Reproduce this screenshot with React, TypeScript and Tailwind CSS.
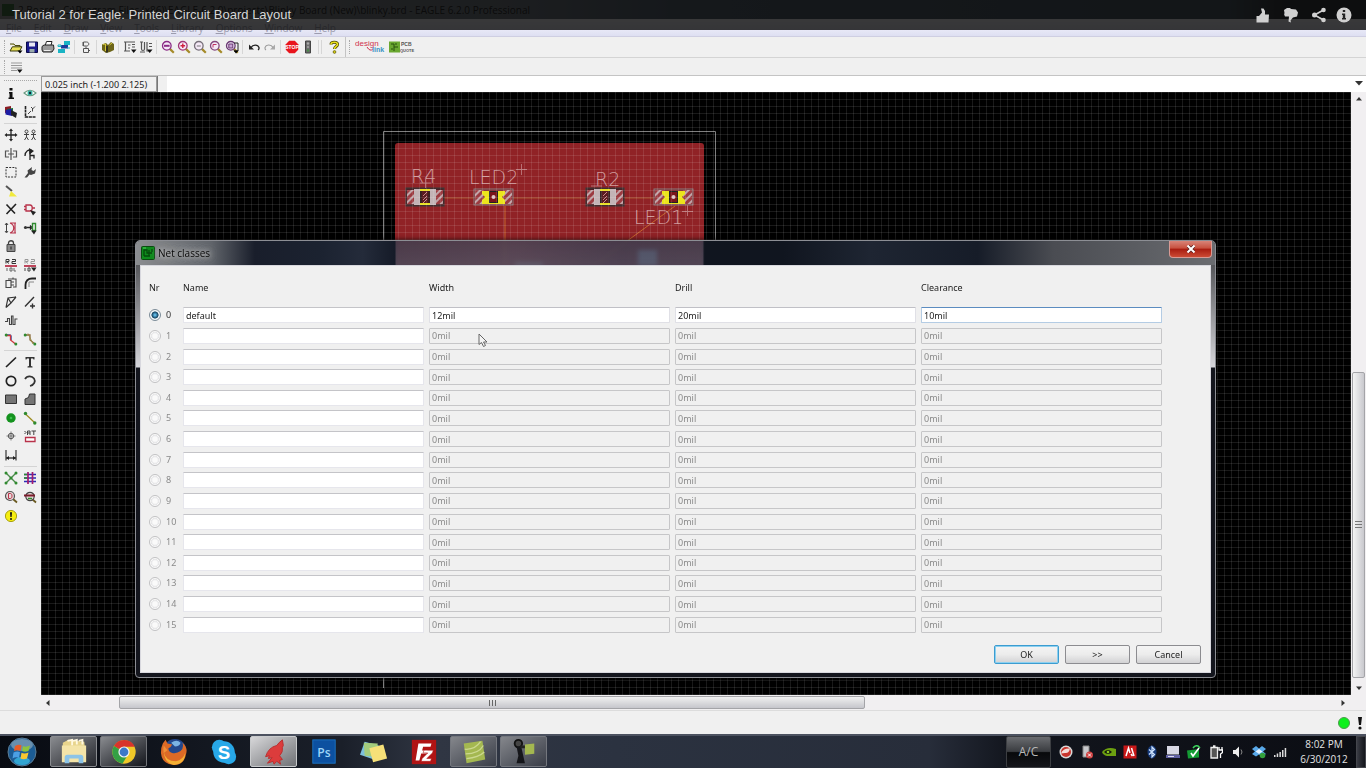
import React from "react";

type Art = Record<string, React.ReactNode>;

const K = "#222";
const G = "#2f8a2f";
const R = "#b8324a";

const lens = (glass: React.ReactNode, ring = "#8a2a86") => (
  <>
    <path d="M8.6 8.6 12.8 12.8" stroke="#a58a28" strokeWidth="2.2" />
    <circle cx="5.8" cy="5.8" r="4.3" fill="#f4e8f6" stroke={ring} strokeWidth="1.3" />
    {glass}
  </>
);

const toolArt: Art = {
  Open: (
    <>
      <path d="M1 4h4l1 1.5h5V7" fill="#f3ee8a" stroke="#4a4a10" />
      <path d="M1 11 3.4 6.8H13L10.5 11Z" fill="#e9e25a" stroke="#3a3a08" />
      <path d="M8.5 10.5h5L11 13.5Z" fill="#000" />
    </>
  ),
  Save: (
    <>
      <path d="M1.5 2h11v10.500h-11Z" fill="#1c1c8c" stroke="#0b0b46" />
      <path d="M4 2.500h6v4H4Z" fill="#e8e8f4" />
      <path d="M4.500 9h5v3.500h-5Z" fill="#9aa" />
    </>
  ),
  Print: (
    <>
      <path d="M4 6 5.500 1.500H11L9.800 6" fill="#fff" stroke={K} />
      <path d="M1 6.500 3 5h9.500l.5 4-2 3H2L1 10Z" fill="#9a9a9a" stroke={K} />
      <path d="M3 10.500h6.500" stroke="#eee" />
    </>
  ),
  "CAM processor": (
    <>
      <path d="M7 1h6v4H7ZM1 9h7v4H1Z" fill="#19b4c4" />
      <path d="M4 5h7v3.500H4Z" fill="#1c3c9c" />
      <path d="M1 5h3v1.500H1ZM10 8h3" stroke="#19b4c4" fill="none" />
    </>
  ),
  Schematic: (
    <>
      <path d="M4.500 2h3c3 0 3 4 0 4h-3ZM3 3h1.500M3 5h1.500" fill="none" stroke="#555" />
      <path d="M4.500 8.500h5v4h-5ZM7 6.500v2M9.500 10.500h1.500" fill="none" stroke="#555" />
    </>
  ),
  Use: (
    <>
      <path d="M1 4.500 5 3l2 2 3-3 3 2v6L9 12 5 13 1 10Z" fill="#6c6418" />
      <path d="M2 4.500 4.500 4v7M8.500 5 11 3" stroke="#d6c838" fill="none" />
      <path d="M6 6v6.500" stroke="#222" strokeWidth="1.500" />
    </>
  ),
  Script: (
    <>
      <path d="M1 2h11M2.500 2v9M1 11h6M5 5h2.500M5 8h2M9 4.500h3M9 7h3" stroke="#555" fill="none" strokeWidth="1.200" />
      <path d="M8 9.500h5.500L10.700 13Z" fill="#111" />
    </>
  ),
  "Run ULP": (
    <>
      <path d="M1 2h3M2.500 2v7c0 2 3 2 3 0V2M8 2v9h2M10 3.500h3M10 6.500h3M1 12h5" stroke="#555" fill="none" strokeWidth="1.200" />
      <path d="M8 9.500h5.500L10.700 13Z" fill="#111" />
    </>
  ),
  "Zoom fit": lens(<path d="M3 5.800h5.600" stroke="#8a2a86" strokeWidth="2" />),
  "Zoom in": lens(<path d="M3.500 5.800h4.600M5.800 3.500v4.600" stroke="#d02040" strokeWidth="1.400" />, "#a03878"),
  "Zoom out": lens(<path d="M3.800 6h4" stroke="#777" />, "#77707a"),
  "Zoom redraw": lens(<path d="M4 7.500V4.500h3.500" stroke="#c03060" fill="none" />, "#84487e"),
  "Zoom select": (
    <>
      {lens(<path d="M3.800 4h4v4h-4Z" fill="#c9a3d4" stroke="#6a3a74" />, "#6a3a74")}
      <path d="M9 3h4v8H9" fill="none" stroke={K} />
      <path d="M8.500 10.500h5L11 13.500Z" fill="#000" />
    </>
  ),
  Undo: (
    <>
      <path d="M2 4.500v5h5Z" fill={K} />
      <path d="M4 7.500C6 4 11 4.500 12 7.500c.2 1-.2 2-1 2.500" fill="none" stroke={K} strokeWidth="1.300" />
    </>
  ),
  Redo: (
    <>
      <path d="M12 4.500v5H7Z" fill="#aaa" />
      <path d="M10 7.500C8 4 3 4.500 2 7.500c-.2 1 .2 2 1 2.500" fill="none" stroke="#999" strokeWidth="1.100" />
    </>
  ),
  Stop: (
    <>
      <path d="M4.200.8h5.600l3.400 3.400v5.600l-3.400 3.400H4.200L.8 9.800V4.200Z" fill="#e8141c" />
      <text x="7" y="9" textAnchor="middle" className="fill-white font-['Liberation_Sans'] text-[5px] font-bold">
        STOP
      </text>
    </>
  ),
  Go: (
    <>
      <path d="M4.500 1h5v12h-5Z" fill="#6a6a6a" stroke="#444" />
      <circle cx="7" cy="3.500" r="1.200" fill="#aaa" />
      <circle cx="7" cy="7" r="1.200" fill="#999" />
      <circle cx="7" cy="10.500" r="1.200" fill="#4a8a4a" />
    </>
  ),
  Help: (
    <>
      <path d="M4 4.500C4 1.500 10.500 1.500 10.500 4.500 10.500 6.500 7.500 6.500 7.500 9" fill="none" stroke="#4a4400" strokeWidth="3" />
      <path d="M4 4.500C4 1.500 10.500 1.500 10.500 4.500 10.500 6.500 7.500 6.500 7.500 9" fill="none" stroke="#ece31c" strokeWidth="1.600" />
      <circle cx="7.500" cy="12" r="1.400" fill="#d8cf10" stroke="#4a4400" strokeWidth=".6" />
    </>
  ),
};

const paletteArt: Art = {
  Info: <path d="M5.500 2h3v2.500h-3ZM5 6h3.500v5.500H10v1.500H4.500v-1.500h1V7.500H5Z" fill="#111" />,
  Show: (
    <>
      <path d="M1 7Q7 1.500 13 7 7 12.500 1 7Z" fill="#fff" stroke="#6a9a80" strokeWidth="1.100" />
      <circle cx="7" cy="7" r="2.500" fill="#38b8a8" />
      <circle cx="7" cy="7" r="1.200" fill="#123" />
    </>
  ),
  Display: (
    <>
      <path d="M1 2l6-1v6L1 8Z" fill="#8c1c24" />
      <path d="M3 4l6-1v6l-6 1Z" fill="#187030" />
      <path d="M1.500 5 8 4v7l-6.500-1.500Z" fill="#1c1ca4" />
      <path d="M7 5l6 3-1 5-5-3Z" fill="#222" />
    </>
  ),
  Mark: (
    <>
      <path d="M2.500 1v11H13" fill="none" stroke={K} strokeWidth="1.600" strokeDasharray="3 .6" />
      <path d="M5 9l3-3M8 2l2 2M12 1.500 9.500 4v2.500" stroke="#444" fill="none" />
    </>
  ),
  Move: (
    <>
      <path d="M7 2v10M2 7h10" stroke={K} strokeWidth="1.300" />
      <path d="M7 .5 9 3H5ZM7 13.500 9 11H5ZM.5 7 3 5v4ZM13.500 7 11 5v4Z" fill={K} />
    </>
  ),
  Copy: <path d="M2 3.500a1.500 1.500 0 1 0 3 0 1.500 1.500 0 1 0-3 0M3.500 5v4L1.500 12M3.500 9l2 3M1 6.500h5M9 3.500a1.500 1.500 0 1 0 3 0 1.500 1.500 0 1 0-3 0M10.500 5v4l-2 3M10.500 9l2 3M8 6.500h5" fill="none" stroke="#444" />,
  Mirror: <path d="M7 1v12M5 4H1.500v6H5M9 4h3.500v6H9M4 7h6" fill="none" stroke="#555" strokeWidth="1.200" />,
  Rotate: (
    <>
      <path d="M2 9C2 4 6 2 9 3.500M7 4v9M7 8.500h4v3" fill="none" stroke={K} strokeWidth="1.300" />
      <path d="M6 1l5 3-4.500 3.500Z" fill={K} />
    </>
  ),
  Group: <path d="M2 2.500h10v9.500H2Z" fill="none" stroke="#333" strokeDasharray="2 1.200" />,
  Change: <path d="M1.500 12.500 5 8 4.500 5.500 9 2l-.5 3 2 1 2.500-2-1 4.500-4 1.500-1.500-.5L4 12.500Z" fill="#444" />,
  Paste: (
    <>
      <path d="M2 2l6 5" stroke="#555" strokeWidth="2" />
      <path d="M7 7l6 5.500H5Z" fill="#f1ea3c" />
    </>
  ),
  Delete: <path d="M2.500 2.500 11 11.500M12 2 2.500 12" stroke={K} strokeWidth="1.600" />,
  Add: (
    <>
      <path d="M3 3h4c3 0 3 6 0 6H3ZM1 4.500h2M1 7.500h2M9.500 6H12" fill="none" stroke={R} strokeWidth="1.300" />
      <path d="M7 8l6 2-3 3.500Z" fill={K} />
    </>
  ),
  Pinswap: (
    <>
      <path d="M2.500 2v9M1 4l1.500-2L4 4M1 10l1.500 2L4 10" fill="none" stroke="#444" />
      <path d="M6 2h6M6 12h6M6 12c5-2 5-8 0-10M11 2v10" fill="none" stroke={R} strokeWidth="1.200" />
    </>
  ),
  Replace: (
    <>
      <circle cx="2.500" cy="6.500" r="1.600" fill="#333" />
      <path d="M4 6.500h4M7 4.500l2 2-2 2" fill="none" stroke="#222" strokeWidth="1.300" />
      <path d="M9.500 2.500h3v7h-3Z" fill="none" stroke={G} strokeWidth="1.400" />
      <path d="M8 9.500h5.500L11 13.500Z" fill={K} />
    </>
  ),
  Lock: (
    <>
      <path d="M4.500 6V4c0-3 5-3 5 0v2" fill="none" stroke="#444" strokeWidth="1.300" />
      <path d="M3 5.500h8v7H3Z" fill="#8a8a8a" stroke="#444" />
      <path d="M7 7.500v3" stroke="#222" />
    </>
  ),
  Name: (
    <>
      <path d="M2 5.500V1.500h3v2H2.500L5 5.500M8 1.500h3.500v2H8v2h4" fill="none" stroke="#333" />
      <path d="M1 8h12" stroke={R} strokeWidth="1.800" />
      <path d="M3 10v3M6 10h2v3H6ZM10 10v3h2" fill="none" stroke="#666" />
    </>
  ),
  Value: (
    <>
      <path d="M2 5.500V1.500h3v2H2.500L5 5.500M8 1.500h3.500v2H8v2h4" fill="none" stroke="#999" />
      <path d="M1 8h12" stroke={R} strokeWidth="1.800" />
      <path d="M2 10v3M5 10h2v3H5Z" fill="none" stroke="#444" />
      <path d="M8 9.500h5.500L11 13.500Z" fill={K} />
    </>
  ),
  Smash: <path d="M2 4.500h5v7H2ZM4 3h8v8H9M9 3V1.500M7 6h3M7 9h3" fill="none" stroke="#444" strokeWidth="1.100" />,
  Miter: (
    <>
      <path d="M2.500 13V9C2.500 5 5 2.500 9 2.500h4" fill="none" stroke={K} strokeWidth="1.800" />
      <path d="M6 6h5M6 6v5" stroke="#888" fill="none" />
    </>
  ),
  Split: <path d="M2 12.500 4 3l8-1M4 3l3 5 5-6M2 12.500 7 8" fill="none" stroke="#333" strokeWidth="1.200" />,
  Optimize: <path d="M2 11.500 11 2M9.500 8.500v5M7 11h5" stroke="#333" strokeWidth="1.400" />,
  Meander: <path d="M1 8.500h2.500V5.500h2v6h2V3h1.500v8.500h2V6h2.500" fill="none" stroke="#444" strokeWidth="1.100" />,
  Route: (
    <>
      <path d="M2 3h4l1 1v4" fill="none" stroke="#2a5ab0" strokeWidth="1.500" />
      <path d="M2 3.500h4.500V8l5 4" fill="none" stroke="#d0343c" strokeWidth="1.300" />
      <circle cx="2.200" cy="3" r="1.500" fill={G} />
      <circle cx="11.800" cy="12" r="1.500" fill={G} />
    </>
  ),
  Ripup: (
    <>
      <path d="M2 3h5v5l5 4" fill="none" stroke="#8a6a3a" strokeWidth="1.300" />
      <path d="M5 1.500 10 12" stroke="#9a8a4a" />
      <circle cx="2.200" cy="3" r="1.500" fill={G} />
      <circle cx="11.800" cy="12" r="1.500" fill={G} />
    </>
  ),
  Wire: <path d="M2 12 12 2.500" stroke={K} strokeWidth="1.700" />,
  Text: <path d="M2.500 2h9v2.500h-1L10 3.500H8V11l1.500.5v1h-5v-1L6 11V3.500H4l-.5 1h-1Z" fill="#333" />,
  Circle: <circle cx="7" cy="7" r="4.700" fill="none" stroke="#222" strokeWidth="1.700" />,
  Arc: <path d="M2 5C4 1.500 9 1.500 11 4.500s0 6.500-4 7.500" fill="none" stroke="#333" strokeWidth="1.700" />,
  Rectangle: <path d="M1.500 3h11v8.500h-11Z" fill="#757575" stroke="#333" />,
  Polygon: <path d="M2 12.500V7l3.500-1.500L6.500 2H12v10.500Z" fill="#757575" stroke="#333" />,
  Via: (
    <>
      <circle cx="7" cy="7" r="4.700" fill="#14921e" />
      <circle cx="7" cy="7" r="1.300" fill="#3cc04c" />
    </>
  ),
  Signal: (
    <>
      <path d="M2 2.500 12 12" stroke="#9a8a1c" strokeWidth="1.200" />
      <circle cx="2.500" cy="2.500" r="1.700" fill={G} />
      <circle cx="11.800" cy="12" r="1.700" fill={G} />
    </>
  ),
  Hole: (
    <>
      <circle cx="7" cy="7" r="2.700" fill="#ddd" stroke="#555" />
      <path d="M7 2.500v9M2.500 7h9" stroke="#666" strokeWidth=".8" />
    </>
  ),
  Attribute: (
    <>
      <path d="M1.500 2l1.500 1.500L1.500 5M4.500 6V2h2.500v4M4.500 4H7M8.500 2H13M10.800 2v4" fill="none" stroke="#444" />
      <path d="M2.500 8.500h9.500v4H2.500Z" fill="#fff" stroke={R} strokeWidth="1.300" />
    </>
  ),
  Dimension: (
    <>
      <path d="M2 2v10.500M12 2v10.500M2 10h10" stroke="#444" strokeWidth="1.300" />
      <path d="M2 10l3-2v4ZM12 10 9 8v4Z" fill="#222" />
    </>
  ),
  Ratsnest: (
    <>
      <path d="M2 2l10 10M12 2 2 12" stroke="#4c8a4c" strokeWidth="1.400" />
      {[[2, 2], [12, 2], [2, 12], [12, 12], [7, 7]].map(([x, y]) => (
        <circle key={`${x}-${y}`} cx={x} cy={y} r="1.500" fill={G} />
      ))}
    </>
  ),
  Auto: (
    <>
      <path d="M1 3.500h12M1 7h12M1 10.500h12" stroke="#2c2cb8" strokeWidth="1.500" />
      <path d="M5 1v12M9.500 1v12" stroke="#a01c6c" strokeWidth="1.700" />
      <path d="M1 3.500h3M1 7h3" stroke={G} strokeWidth="1.700" />
    </>
  ),
  "Electrical rule check": (
    <>
      <path d="M9 9l4 3.500" stroke="#6a5a20" strokeWidth="1.800" />
      <circle cx="6" cy="6" r="4.500" fill="#e6d8d8" stroke="#555" strokeWidth="1.200" />
      <path d="M4.500 3.500v5h2c2 0 2-5 0-5Z" fill="none" stroke={R} />
    </>
  ),
  "Design rule check": (
    <>
      <path d="M9 9l4 3.500" stroke="#6a5a20" strokeWidth="1.800" />
      <circle cx="7" cy="6.500" r="4.200" fill="#e6d8d8" stroke="#444" strokeWidth="1.200" />
      <path d="M1 5.500h11" stroke="#7c1c2c" strokeWidth="2" />
      <path d="M5 8.500h4" stroke={G} strokeWidth="1.500" />
    </>
  ),
  Errors: (
    <>
      <circle cx="7" cy="7" r="5.600" fill="#f6ee10" stroke="#a9a210" />
      <path d="M6 3.200h2L7.600 8H6.400Z" fill="#111" />
      <circle cx="7" cy="10" r="1" fill="#111" />
    </>
  ),
};

function ToolButton({ name, art }: { name: string; art: Art }) {
  return (
    <button type="button" aria-label={name} title={name} className="block size-3.5 shrink-0">
      <svg viewBox="0 0 14 14" className="size-3.5">
        {art[name]}
      </svg>
    </button>
  );
}

const toolGroups = [
  ["Open", "Save", "Print", "CAM processor"],
  ["Schematic"],
  ["Use"],
  ["Script", "Run ULP"],
  ["Zoom fit", "Zoom in", "Zoom out", "Zoom redraw", "Zoom select"],
  ["Undo", "Redo"],
  ["Stop", "Go"],
];

const menus = ["File", "Edit", "Draw", "View", "Tools", "Library", "Options", "Window", "Help"];

function Grip() {
  return <span className="h-3.5 w-0 border-l border-dotted border-[#a8a8a8]" />;
}

function Toolbar() {
  return (
    <div className="flex h-[21px] items-center border-b border-[#d4d4d4] bg-[#f0f0f0] pl-1">
      <Grip />
      <div className="flex items-center pl-1">
        {toolGroups.map((group, i) => (
          <React.Fragment key={group[0]}>
            {i > 0 && <span className="mx-[3px] h-3.5 w-[2px] border-l border-[#d6d6d6]" />}
            <div className="flex gap-[2px]">
              {group.map((name) => (
                <ToolButton key={name} name={name} art={toolArt} />
              ))}
            </div>
          </React.Fragment>
        ))}
        <span className="ml-[3px] mr-[5px] h-3.5 w-[4px] border-x border-[#d6d6d6]" />
        <ToolButton name="Help" art={toolArt} />
      </div>
      <span className="ml-1 mr-[3px] h-full border-l border-[#c4c4c4]" />
      <Grip />
      <button type="button" aria-label="design link" className="ml-[5px]">
        <svg viewBox="0 0 30 16" className="h-4 w-[30px]">
          <text x="0" y="7" className="fill-[#d0304c] font-['Liberation_Sans'] text-[8px]">design</text>
          <path d="M12 8q3 5 6 2" fill="none" stroke="#d0304c" />
          <text x="17" y="13" className="fill-[#3a94c4] font-['Liberation_Sans'] text-[7px] font-bold">link</text>
        </svg>
      </button>
      <button type="button" aria-label="PCB quote" className="ml-1">
        <svg viewBox="0 0 28 14" className="h-3.5 w-7">
          <rect x="0" y="1.500" width="11" height="11" fill="#6aa830" />
          <path d="M2 4h3v3h4M5 7v4M2 9h2M7 3v2" fill="none" stroke="#28500c" />
          <text x="12" y="6" className="fill-[#555] font-['Liberation_Sans'] text-[5px] font-bold">PCB</text>
          <text x="11" y="12" className="fill-[#555] font-['Liberation_Sans'] text-[4px] font-bold">QUOTE</text>
        </svg>
      </button>
    </div>
  );
}

const paletteGroups = [
  { box: "h-[37px]", items: ["Info", "Show", "Display", "Mark"] },
  {
    box: "h-[222px]",
    items: [
      "Move", "Copy", "Mirror", "Rotate", "Group", "Change", "Paste", "", "Delete", "Add", "Pinswap", "Replace",
      "Lock", "", "Name", "Value", "Smash", "Miter", "Split", "Optimize", "Meander", "", "Route", "Ripup",
    ],
  },
  {
    box: "h-[111px]",
    items: ["Wire", "Text", "Circle", "Arc", "Rectangle", "Polygon", "Via", "Signal", "Hole", "Attribute", "Dimension", ""],
  },
  {
    box: "h-[56px]",
    items: ["Ratsnest", "Auto", "Electrical rule check", "Design rule check", "Errors", ""],
  },
];

function Palette() {
  return (
    <aside className="flex w-[41px] shrink-0 flex-col bg-[#f0f0f0] px-1 pt-1">
      <span className="mb-[3px] border-t border-dotted border-[#a8a8a8]" />
      {paletteGroups.map((g, i) => (
        <React.Fragment key={g.box}>
          {i > 0 && <hr className="my-[2px] border-[#d4d4d4]" />}
          <div className={`grid grid-cols-[14px_14px] gap-x-[5px] items-center ${g.box}`}>
            {g.items.map((name, j) =>
              name ? <ToolButton key={name} name={name} art={paletteArt} /> : <span key={j} />
            )}
          </div>
        </React.Fragment>
      ))}
    </aside>
  );
}

function Resistor({ x, y }: { x: number; y: number }) {
  return (
    <g transform={`translate(${x} ${y})`}>
      <rect x="0" y="0" width="38" height="18" fill="#4a2024" stroke="#3a3a3a" />
      <rect x="1" y="2" width="13" height="14" fill="url(#hatch)" />
      <rect x="24" y="2" width="13" height="14" fill="url(#hatch)" />
      <rect x="8" y="1" width="6" height="16" fill="#c3b3b6" />
      <rect x="24" y="1" width="6" height="16" fill="#c3b3b6" />
      <rect x="15" y="1.500" width="8" height="15" fill="#5a1c20" stroke="#222" />
      <path d="M14 2h10M14 16h10" stroke="#e8e020" strokeWidth="2" />
      <path d="M17 8l4-4M17 12l4-4M17 15l4-4" stroke="#c9888c" />
    </g>
  );
}

function Led({ x, y }: { x: number; y: number }) {
  return (
    <g transform={`translate(${x} ${y})`}>
      <rect x="0" y="1" width="39" height="16" fill="#7a2428" stroke="#8a7a7c" />
      <rect x="1" y="2" width="9" height="14" fill="url(#hatch)" />
      <rect x="29" y="2" width="9" height="14" fill="url(#hatch)" />
      <path d="M8 3h23v3l-3 3 3 3v4H8v-4l3-3-3-3Z" fill="#ece41c" />
      <rect x="15.500" y="3.500" width="8" height="11" fill="#7a1418" stroke="#222" />
      <circle cx="19.500" cy="9" r="2" fill="#e0c4c4" />
    </g>
  );
}

function Board() {
  const label = "fill-[#cf9a9c] font-['DejaVu_Sans_Light','DejaVu_Sans',sans-serif] text-[19px] font-extralight";
  return (
    <svg viewBox="380 125 345 563" className="absolute left-[339px] top-[33px] h-[563px] w-[345px]">
      <defs>
        <pattern id="hatch" width="5" height="5" patternUnits="userSpaceOnUse" patternTransform="rotate(45)">
          <rect width="5" height="5" fill="#9c3a40" />
          <rect width="2" height="5" fill="#c0a4a8" />
        </pattern>
      </defs>
      <path d="M383.500 688V131.500h332V640" fill="none" stroke="#7e7e7e" />
      <rect x="395" y="143" width="309" height="480" rx="3" fill="#902226" />
      <path d="M443 198h31M513 198h73M624 198h30" fill="none" stroke="#a8542c" />
      <path d="M505 206v120M675 206 560 290" fill="none" stroke="#c4642c" />
      <Resistor x={406} y={188} />
      <Led x={474} y={188} />
      <Resistor x={586} y={188} />
      <Led x={654} y={188} />
      <text x="411" y="183" className={label}>R4</text>
      <text x="469" y="184" className={label}>LED2</text>
      <text x="595" y="186" className={label}>R2</text>
      <text x="634" y="224" className={label}>LED1</text>
      <path d="M516 169.500h11M521.500 164v11M682 211.500h11M687.500 205v11M420 183h11M425.500 178v10M591 186h11" stroke="#b87074" fill="none" />
      <rect x="638" y="250" width="19" height="16" fill="#c8dcff" />
      <rect x="515" y="262" width="28" height="8" fill="#c09a9e" />
    </svg>
  );
}

function Canvas() {
  return (
    <div className="relative flex-1 overflow-hidden bg-black">
      <Board />
      <div className="absolute inset-0 bg-[linear-gradient(to_right,rgba(255,255,255,0.1)_1px,transparent_1px),linear-gradient(to_bottom,rgba(255,255,255,0.1)_1px,transparent_1px)] bg-[length:7px_7px]" />
    </div>
  );
}

function Arrow({ d, label }: { d: string; label: string }) {
  return (
    <button type="button" aria-label={label} className="flex size-3.5 shrink-0 items-center justify-center">
      <svg viewBox="0 0 8 8" className="size-2">
        <path d={d} fill="#333" />
      </svg>
    </button>
  );
}

function Workspace() {
  return (
    <section className="flex min-w-0 flex-1 flex-col">
      <div className="flex h-4 items-stretch bg-white">
        <div className="flex w-[116px] items-center border border-[#9a9a9a] bg-[#f0f0f0] pl-[3px] font-['Noto_Sans',sans-serif] text-[9px] leading-none text-[#222] whitespace-nowrap">
          0.025 inch (-1.200 2.125)
        </div>
        <span className="w-2.5 border-l border-[#777] bg-[#f0f0f0]" />
        <input aria-label="Command line" className="min-w-0 flex-1 bg-white px-1 text-[9px] outline-none" />
        <Arrow d="M0 2h8L4 6.500Z" label="Command history" />
      </div>
      <div className="flex min-h-0 flex-1">
        <Canvas />
        <div className="flex w-[15px] flex-col items-center bg-[#f1eff1]">
          <Arrow d="M1 5.500h6L4 2Z" label="Scroll up" />
          <span className="flex-[266]" />
          <span className="flex w-[13px] flex-[305] flex-col items-center justify-center gap-[2px] rounded-[2px] border border-[#a4a4a8] bg-linear-to-r from-[#f4f4f4] to-[#c9c9ce]">
            <i className="h-px w-[7px] bg-[#777]" />
            <i className="h-px w-[7px] bg-[#777]" />
            <i className="h-px w-[7px] bg-[#777]" />
          </span>
          <span className="h-[3px]" />
          <Arrow d="M1 2.500h6L4 6Z" label="Scroll down" />
        </div>
      </div>
      <div className="flex h-[15px] items-center bg-[#f1eff1] pr-4">
        <Arrow d="M5.500 1v6L2 4Z" label="Scroll left" />
        <span className="ml-16 flex h-[13px] w-[57%] items-center justify-center gap-[2px] rounded-[2px] border border-[#a4a4a8] bg-linear-to-b from-[#f0f0f0] to-[#c6c6cc]">
          <i className="h-[6px] w-px bg-[#666]" />
          <i className="h-[6px] w-px bg-[#666]" />
          <i className="h-[6px] w-px bg-[#666]" />
        </span>
        <span className="flex-1" />
        <Arrow d="M2.500 1v6L6 4Z" label="Scroll right" />
      </div>
    </section>
  );
}

function fieldStyle(active: boolean, focused: boolean) {
  if (focused) return "border-[#b4cce4] border-t-[#5c8cc0] bg-white text-[#222]";
  if (active) return "border-[#e0e0e6] border-t-[#c0c0c6] bg-white text-[#222]";
  return "border-[#c6c6c8] bg-[#f0f0f0] text-[#8a8a8a]";
}

function NetRow({ nr }: { nr: number }) {
  const active = nr === 0;
  return (
    <tr>
      <td className="p-0">
        <label className="flex items-center gap-[5px]">
          <input
            type="radio"
            name="net"
            defaultChecked={active}
            disabled={!active}
            className="size-3 appearance-none rounded-full border border-[#c2c2c4] bg-[radial-gradient(circle,#fafafa_30%,#e4e4e6_55%,#f8f8f8_60%)] checked:border-[#7c8c98] checked:bg-[radial-gradient(circle,#5cb4e0_10%,#12405e_45%,#f4f8fa_55%)]"
          />
          <span className={active ? "text-[#333]" : "text-[#8a8a8a]"}>{nr}</span>
        </label>
      </td>
      <td className="p-0">
        <input
          aria-label={`Name ${nr}`}
          defaultValue={active ? "default" : ""}
          className="block h-4 w-full border border-[#e6e6ec] border-t-[#c4c4c8] bg-white px-[2px] text-[#222] outline-none"
        />
      </td>
      {(["Width", "Drill", "Clearance"] as const).map((kind, i) => (
        <td key={kind} className="p-0">
          <input
            aria-label={`${kind} ${nr}`}
            disabled={!active}
            defaultValue={active ? ["12mil", "20mil", "10mil"][i] : "0mil"}
            className={`block h-4 w-full rounded-[1px] border px-[2px] outline-none ${fieldStyle(active, active && i === 2)}`}
          />
        </td>
      ))}
    </tr>
  );
}

function NetClasses() {
  const btn =
    "h-[19px] w-[65px] rounded-[2px] border bg-linear-to-b from-[#f4f4f4] via-[#ececec] to-[#d2d2d4] text-[#222]";
  return (
    <div
      role="dialog"
      aria-label="Net classes"
      className="absolute left-[135px] right-[150px] top-[240px] rounded-t-[5px] rounded-b-[4px] border border-[#8c8e94] bg-[linear-gradient(to_bottom,rgba(90,92,98,0.6),rgba(225,225,230,0.95)_126px,rgba(20,22,30,0.98)_127px)] px-1 pb-1 shadow-[0_0_5px_rgba(0,0,0,0.9)] backdrop-blur-[2px]"
    >
      <div className="-mx-1 flex h-6 items-start rounded-t-[4px] bg-[linear-gradient(to_right,#8b8d90,#60646a_7%,#191e2b_11%,#1b2230_17%,#242b3a_21%,#151b28_24%,rgba(52,50,70,0.62)_24.1%,rgba(66,60,80,0.62)_35%,rgba(50,50,72,0.66)_45%,rgba(54,54,74,0.66)_52.500%,#10151f_52.700%,#10151f_60%,#1e2532_68%,#161c28_78%,#4a4c52_85%,#6a6c70)]">
        <svg viewBox="0 0 14 14" className="ml-[5px] mt-[5px] size-3.5">
          <rect x=".5" y=".5" width="13" height="13" rx="1" fill="#0e8a1c" stroke="#0a4a10" />
          <path d="M3 10V4h3v3h5M8 4v6M3 10h6M11 3v3" fill="none" stroke="#054a0c" strokeWidth="1.300" />
          <path d="M2 2h3" stroke="#4cd45a" />
        </svg>
        <span className="ml-[3px] mt-[4px] font-['Open_Sans',sans-serif] text-[10px] leading-4 text-[#080808] [text-shadow:0_0_4px_#c8c8c8,0_0_8px_#b8b8b8,0_0_8px_#b8b8b8]">
          Net classes
        </span>
        <button
          type="button"
          aria-label="Close"
          className="ml-auto mr-[3px] flex h-[17px] w-[43px] items-center justify-center rounded-b-[4px] border border-t-0 border-[#d89a94] bg-[linear-gradient(to_bottom,#d88478,#c8503e_45%,#a81c10_50%,#cc4a34)]"
        >
          <svg viewBox="0 0 10 8" className="h-2 w-2.5">
            <path d="M2 1l6 6M8 1 2 7" stroke="#5a2020" strokeWidth="3.400" />
            <path d="M1.500.5l7 7M8.500.5l-7 7" stroke="#fff" strokeWidth="2" />
          </svg>
        </button>
      </div>
      <div className="flex flex-col border border-[#d8d8de] bg-[#f0f0f0] px-2 pb-2 pt-[5px] font-['Noto_Sans',sans-serif] text-[9px] leading-3">
        <div className="pr-[30px]">
          <table className="h-[364px] w-full table-fixed border-separate border-spacing-x-[5px] border-spacing-y-0 -ml-[5px]">
            <colgroup>
              <col className="w-[29px]" />
              <col />
              <col />
              <col />
              <col />
            </colgroup>
            <thead>
              <tr className="h-[34px] text-left text-[#222]">
                {["Nr", "Name", "Width", "Drill", "Clearance"].map((h) => (
                  <th key={h} scope="col" className="p-0 font-normal">
                    {h}
                  </th>
                ))}
              </tr>
            </thead>
            <tbody>
              {Array.from({ length: 16 }, (_, nr) => (
                <NetRow key={nr} nr={nr} />
              ))}
            </tbody>
          </table>
        </div>
        <div className="mt-[10px] flex justify-end gap-[6px] pr-px">
          <button type="button" className={`${btn} border-[#3c9cd0] shadow-[inset_0_0_0_1px_#8cd0f0]`}>OK</button>
          <button type="button" className={`${btn} border-[#8c8c90]`}>&gt;&gt;</button>
          <button type="button" className={`${btn} border-[#8c8c90]`}>Cancel</button>
        </div>
      </div>
    </div>
  );
}

const apps: { name: string; box: string; art: React.ReactNode }[] = [
  {
    name: "Windows Explorer",
    box: "border-[#8a8c90] bg-linear-to-br from-[#8a8c90] to-[#26282e]",
    art: (
      <>
        <path d="M3 5 9 2l17 2 2 20H3Z" fill="#e8d48c" />
        <path d="M8 3l5-1v6M14 3l4-1v5M20 3l4-1v5" fill="none" stroke="#fff8e0" strokeWidth="2" />
        <path d="M2 8h26v18H2Z" fill="#f4e4a8" />
        <path d="M5 27v-6q0-3 3-3h14q3 0 3 3v6h-5v-5H10v5Z" fill="#8cc4e8" />
      </>
    ),
  },
  {
    name: "Chrome",
    box: "border-[#73757a] bg-linear-to-br from-[#8a8c90] to-[#16181e]",
    art: (
      <>
        <circle cx="15" cy="15" r="12.500" fill="#f0c828" />
        <path d="M15 15 4.200 8.700A12.500 12.500 0 0 1 26.500 9.500H15Z" fill="#d8342c" />
        <path d="M15 15 4.200 8.700A12.500 12.500 0 0 0 13.500 27.400L19.500 17.500Z" fill="#34a044" />
        <circle cx="15" cy="15" r="6" fill="#f4f4f4" />
        <circle cx="15" cy="15" r="4.700" fill="#3c78c8" />
      </>
    ),
  },
  {
    name: "Firefox",
    box: "border-transparent",
    art: (
      <>
        <circle cx="16" cy="13" r="12" fill="#24488c" />
        <path d="M12 5q6-4 10 0-1 4-6 4Z" fill="#7cb4e4" />
        <path d="M3 6q2-3 3-4l2 4 5 1q-1 3-4 4 0 4 4 5 5 1 9-2 4-4 2-9 6 5 4 12-2 12-13 12Q2 28 1 16q0-6 2-10Z" fill="#dc6a26" />
        <path d="M4 15q2 10 13 10 8-2 10-9 0 12-12 13Q5 27 4 15Z" fill="#f4b034" />
        <path d="M4 8q-1 4 0 8l4-3Z" fill="#f09038" />
      </>
    ),
  },
  {
    name: "Skype",
    box: "border-transparent",
    art: (
      <>
        <circle cx="10" cy="10" r="8" fill="#28a8e8" />
        <circle cx="20" cy="20" r="8" fill="#28a8e8" />
        <circle cx="15" cy="15" r="11.500" fill="#28a8e8" />
        <text x="15" y="22" textAnchor="middle" className="fill-white font-['Liberation_Sans'] text-[20px] font-bold">S</text>
      </>
    ),
  },
  {
    name: "EAGLE",
    box: "border-[#c8cacc] bg-linear-to-br from-[#d8d8da] to-[#707276]",
    art: <path d="M24 2q-4 3-6 6-9 2-12 12l4-1-1 3 4-1-5 6 6-2 1 3 3-3 4 3-1-4 3-1-3-4q4-4 3-9l1-2Z" fill="#dc3c3c" stroke="#b82c2c" />,
  },
  {
    name: "Photoshop",
    box: "border-transparent",
    art: (
      <>
        <rect x="3" y="2" width="24" height="25" fill="#0c50a0" stroke="#1c74c4" />
        <text x="15" y="20" textAnchor="middle" className="fill-[#9cd4f8] font-['Open_Sans'] text-[13px] font-semibold">Ps</text>
      </>
    ),
  },
  {
    name: "Sticky Notes",
    box: "border-transparent",
    art: (
      <>
        <path d="M5 4 20 8 15 23 0 18Z" fill="#7cc0dc" />
        <path d="M4 5 19 6 17 20 5 19Z" fill="#a4cc7c" />
        <path d="M10 11 25 7 29 22 14 26Z" fill="#f6e078" />
      </>
    ),
  },
  {
    name: "FileZilla",
    box: "border-transparent",
    art: (
      <>
        <rect x="2" y="2" width="26" height="26" fill="#b01414" />
        <path d="M9 6h14l-1 3.500h-8l-1 4h6l-1 3h-6L10 24H6Z" fill="#fff" />
        <path d="M15 13h10l-1 3-6 6h5l-1 3H12l1-3 6-6h-5Z" fill="#fff" stroke="#b01414" strokeWidth=".6" />
      </>
    ),
  },
  {
    name: "Camtasia Studio",
    box: "border-[#74777e] bg-linear-to-br from-[#85878c] to-[#3a3e48]",
    art: (
      <>
        <path d="M4 6 24 3 27 23 7 27Z" fill="#a4b850" />
        <path d="M5 12q11 1 17-8M6 17q14 0 19-9M7 22q13-1 19-7" fill="none" stroke="#ccd890" strokeWidth="1.400" />
      </>
    ),
  },
  {
    name: "Camtasia Recorder",
    box: "border-[#74777e] bg-linear-to-br from-[#85878c] to-[#3a3e48]",
    art: (
      <>
        <circle cx="9" cy="6" r="4" fill="#444" stroke="#111" strokeWidth="2" />
        <path d="M7 9h5l4 18H7l2-8Z" fill="#15161a" />
        <path d="M11 8h7v3h-7Z" fill="#222" />
        <path d="M16 7 26 6v11l-10 1Z" fill="#a4b850" />
      </>
    ),
  },
];

const tray: { name: string; art: React.ReactNode }[] = [
  { name: "Sync", art: <><circle cx="7" cy="7" r="6.500" fill="#d8d8d8" /><circle cx="7" cy="7" r="5" fill="#c8342c" /><path d="M2 8.500q2-5.500 9-5-1 5-5 4.500Z" fill="#f4dcd8" /></> },
  { name: "Device", art: <><path d="M3 1h6v11H3Z" fill="#c8c8cc" stroke="#888" /><circle cx="9.500" cy="10" r="3.500" fill="#d04040" /><path d="M8 8.500l3 3M11 8.500l-3 3" stroke="#fff" /></> },
  { name: "NVIDIA", art: <><path d="M0 7q5-6 14-3v7H5Q1 10 0 7Z" fill="#6ca010" /><path d="M2 7q4-4 8 0-4 4-8 0Z" fill="#14180c" /><circle cx="6" cy="7" r="1.300" fill="#8cc820" /></> },
  { name: "Adobe", art: <><rect x=".5" y=".5" width="13" height="13" fill="#c81818" /><path d="M3 11 5.500 3 7 8M8.500 3 11 11M8 9l1.500 2" fill="none" stroke="#fff" strokeWidth="1.500" /></> },
  { name: "Bluetooth", art: <><ellipse cx="7" cy="7" rx="4.500" ry="6.500" fill="#183c7c" /><path d="M4 4.500 9.500 9.500 7 12V2l2.500 2.500L4 9.500" fill="none" stroke="#cfe4ff" strokeWidth="1.200" /></> },
  { name: "Display", art: <><path d="M1 1h12v8.500H1Z" fill="#d8d8e4" /><path d="M0 10h14v3H0Z" fill="#6060a0" /><path d="M2 11.500h6" stroke="#dde" /></> },
  { name: "Backup", art: <><path d="M0 5.500 12 4v8.500L1 13.500Z" fill="#149c34" /><path d="M4 8l2 3 6-8" fill="none" stroke="#fff" strokeWidth="1.600" /><path d="M6 3q2-3 5-2l2 2" stroke="#3cd45c" strokeWidth="1.500" fill="none" /></> },
  { name: "Battery", art: <><path d="M2 2.500h6.500V13H2ZM4 1h2.500" fill="#555" stroke="#eee" strokeWidth="1.300" /><path d="M10 2v3M13 2v3M9.500 5h4v2.500l-2 1.500v4" fill="none" stroke="#fff" strokeWidth="1.300" /></> },
  { name: "Volume", art: <><path d="M3 5h2.500L9 1.500v11L5.500 9H3Z" fill="#eee" /><path d="M11 4.500q2 2.500 0 5" fill="none" stroke="#888" /></> },
  { name: "Dropbox", art: <><path d="M4 1 7 3.500 10 1l4 3-3 2.500L14 9l-4 2.500L7 9.500 4 11.500 0 9l3-2.500L0 4Z" fill="#58a8e8" /><path d="M7 4l3.500 2.500L7 9 3.500 6.500Z" fill="#e4f2ff" /><circle cx="10.500" cy="10.500" r="2.800" fill="#34a03c" /></> },
  { name: "Network", art: <path d="M1 12v-2h1.500v2ZM3.700 12V8.500h1.500V12ZM6.400 12V7h1.500v5ZM9 12V5h1.500v7ZM11.700 12V3h1.500v9Z" fill="#ddd" /> },
];

function Taskbar() {
  return (
    <footer className="flex h-[34px] items-stretch border-t-2 border-[#4c5260] bg-[linear-gradient(to_right,#080b12,#1a1f29_25%,#303643_32%,#2b3240_45%,#272d3a_68%,#12151d_74%,#0b0d13)]">
      <button type="button" aria-label="Start" className="flex w-[50px] items-center pl-[7px]">
        <svg viewBox="0 0 30 30" className="size-[30px]">
          <circle cx="15" cy="15" r="14" fill="#1c5c94" stroke="#5c7c94" />
          <ellipse cx="15" cy="8" rx="11" ry="6" fill="#7c9cb4" opacity=".8" />
          <ellipse cx="15" cy="24" rx="8" ry="4" fill="#3cc4ec" opacity=".7" />
          <path d="M8 9q4-2 6.500-.5L13.500 14q-3-1.500-6.500 0Z" fill="#e85c28" />
          <path d="M16 9q3 1.500 7-.5L21.500 14q-3.500 1.500-6.500 0Z" fill="#8cc43c" />
          <path d="M6.500 15.500q4-2 6.500-.2L12 21q-3-1.500-6.500.5Z" fill="#4ca0e4" />
          <path d="M14.500 15.800q3 1.500 7-.3L20 21.500q-3.500 1.500-6.500 0Z" fill="#f8c830" />
        </svg>
      </button>
      <nav className="flex gap-[3px] pb-px">
        {apps.map((a) => (
          <button
            key={a.name}
            type="button"
            aria-label={a.name}
            className={`flex w-[47px] items-center justify-center rounded-[2px] border ${a.box}`}
          >
            <svg viewBox="0 0 30 30" className="size-7">
              {a.art}
            </svg>
          </button>
        ))}
      </nav>
      <div className="ml-auto flex items-stretch font-['Open_Sans',sans-serif] text-[#e4e4e4]">
        <button type="button" className="w-[45px] rounded-[2px] border border-[#3c3e42] bg-[linear-gradient(to_bottom,#6a6c70,#3a3c40_48%,#08090b_52%,#14151a)] text-[12px] text-[#b8b8b8]">
          A/C
        </button>
        <div className="ml-2 flex w-[228px] items-center justify-between">
          {tray.map((t) => (
            <button key={t.name} type="button" aria-label={t.name} className="size-3.5">
              <svg viewBox="0 0 14 14" className="size-3.5">
                {t.art}
              </svg>
            </button>
          ))}
        </div>
        <div className="flex w-[69px] flex-col justify-center pl-[5px] text-center text-[10px] leading-[15px]">
          <time>8:02 PM</time>
          <time>6/30/2012</time>
        </div>
        <button type="button" aria-label="Show desktop" className="w-2.5 border border-[#44464c] bg-linear-to-r from-[#3a3c44] to-[#14161c]" />
      </div>
    </footer>
  );
}

function VideoHeader() {
  return (
    <header className="absolute inset-x-0 top-0 flex h-[30px] items-center bg-[rgba(14,14,14,0.82)] pl-3 pr-[14px] text-[#d6d6d6]">
      <h1 className="font-['Liberation_Sans',Arial,sans-serif] text-[13px] leading-4">
        Tutorial 2 for Eagle: Printed Circuit Board Layout
      </h1>
      <div className="ml-auto flex items-center gap-3">
        <button type="button" aria-label="Like" className="size-4">
          <svg viewBox="0 0 16 16" className="size-4">
            <path d="M1.500 15.500V9H4L7 5.500 6 1.500h2.500L10 4v3.500h4L13.500 15.500Z" fill="#d0d0d0" />
          </svg>
        </button>
        <button type="button" aria-label="Dislike" className="size-4">
          <svg viewBox="0 0 16 16" className="size-4">
            <path d="M1 3 4 1h3l1 1 5 .500 2 3-1 4-4 1-2.500 3L8 15.500 5.500 14.500 6 9.500H2Q.5 7 1.500 6Z" fill="#d0d0d0" />
          </svg>
        </button>
        <button type="button" aria-label="Share" className="size-4">
          <svg viewBox="0 0 16 16" className="size-4">
            <path d="M12.500 3 3.500 8l9 5" fill="none" stroke="#d0d0d0" strokeWidth="1.700" />
            <circle cx="12.500" cy="3" r="2.300" fill="#d0d0d0" />
            <circle cx="3.500" cy="8" r="2.500" fill="#d0d0d0" />
            <circle cx="12.500" cy="13" r="2.300" fill="#d0d0d0" />
          </svg>
        </button>
        <button type="button" aria-label="Information" className="-ml-[3px] size-4">
          <svg viewBox="0 0 16 16" className="size-4">
            <circle cx="8" cy="8" r="7.500" fill="#d0d0d0" />
            <path d="M6.800 3h2.400v2H6.800ZM6 6.500h3.200V11H10v1.500H6V11h.8V8H6Z" fill="#222" />
          </svg>
        </button>
      </div>
    </header>
  );
}

export default function App() {
  return (
    <div className="relative flex min-h-screen flex-col overflow-hidden bg-[#f0f0f0]">
      <div className="flex h-[19px] items-center gap-1 whitespace-nowrap bg-[linear-gradient(to_right,#8a8a8a,#7a7e82_15%,#5c6670_38%,#38485a_50%,#2c3c48_90%,#101418_94%)] pl-[2px] font-['Open_Sans',sans-serif] text-[10px] leading-none text-black">
        <span className="size-3 bg-[#1c5a1c]" />
        2 Board - C:\Program Files (x86)\EAGLE-6.2.0\projects\Blinky Board (New)\blinky.brd - EAGLE 6.2.0 Professional
      </div>
      <nav className="flex h-[18px] items-center gap-3 border-b border-[#cfcfe2] bg-linear-to-b from-[#fafaff] to-[#dedff2] pl-[6px] font-['Open_Sans',sans-serif] text-[10px] leading-none text-[#9c9cae]">
        {menus.map((m) => (
          <button key={m} type="button" className="first-letter:underline">
            {m}
          </button>
        ))}
      </nav>
      <Toolbar />
      <div className="flex h-[18px] items-center gap-1 border-b border-[#c4c4c4] pl-1">
        <Grip />
        <button type="button" aria-label="Layer list">
          <svg viewBox="0 0 14 14" className="size-3.5">
            <path d="M2 3h11M2 5.500h11M2 8h11M2 10.500h6" stroke="#999" />
            <path d="M8 9.500h5.500L10.700 13Z" fill="#111" />
          </svg>
        </button>
      </div>
      <main className="flex min-h-0 flex-1">
        <Palette />
        <Workspace />
      </main>
      <div className="flex h-6 items-center justify-end gap-[7px] border-t border-[#dcdcdc] pr-[3px]">
        <span className="size-3 rounded-full border border-[#4c9c4c] bg-[#0cf01c]" />
        <svg viewBox="0 0 6 14" className="h-3.5 w-1.5">
          <path d="M1 1h4L4 9H2Z" fill="#111" />
          <circle cx="3" cy="12" r="1.600" fill="#111" />
        </svg>
      </div>
      <Taskbar />
      <NetClasses />
      <svg viewBox="0 0 12 16" className="absolute left-[478px] top-[333px] h-4 w-3">
        <path d="M1 1v10.500l2.500-2 2 4 2-1-2-3.500H9Z" fill="#f4f4f4" stroke="#666" />
      </svg>
      <VideoHeader />
    </div>
  );
}
